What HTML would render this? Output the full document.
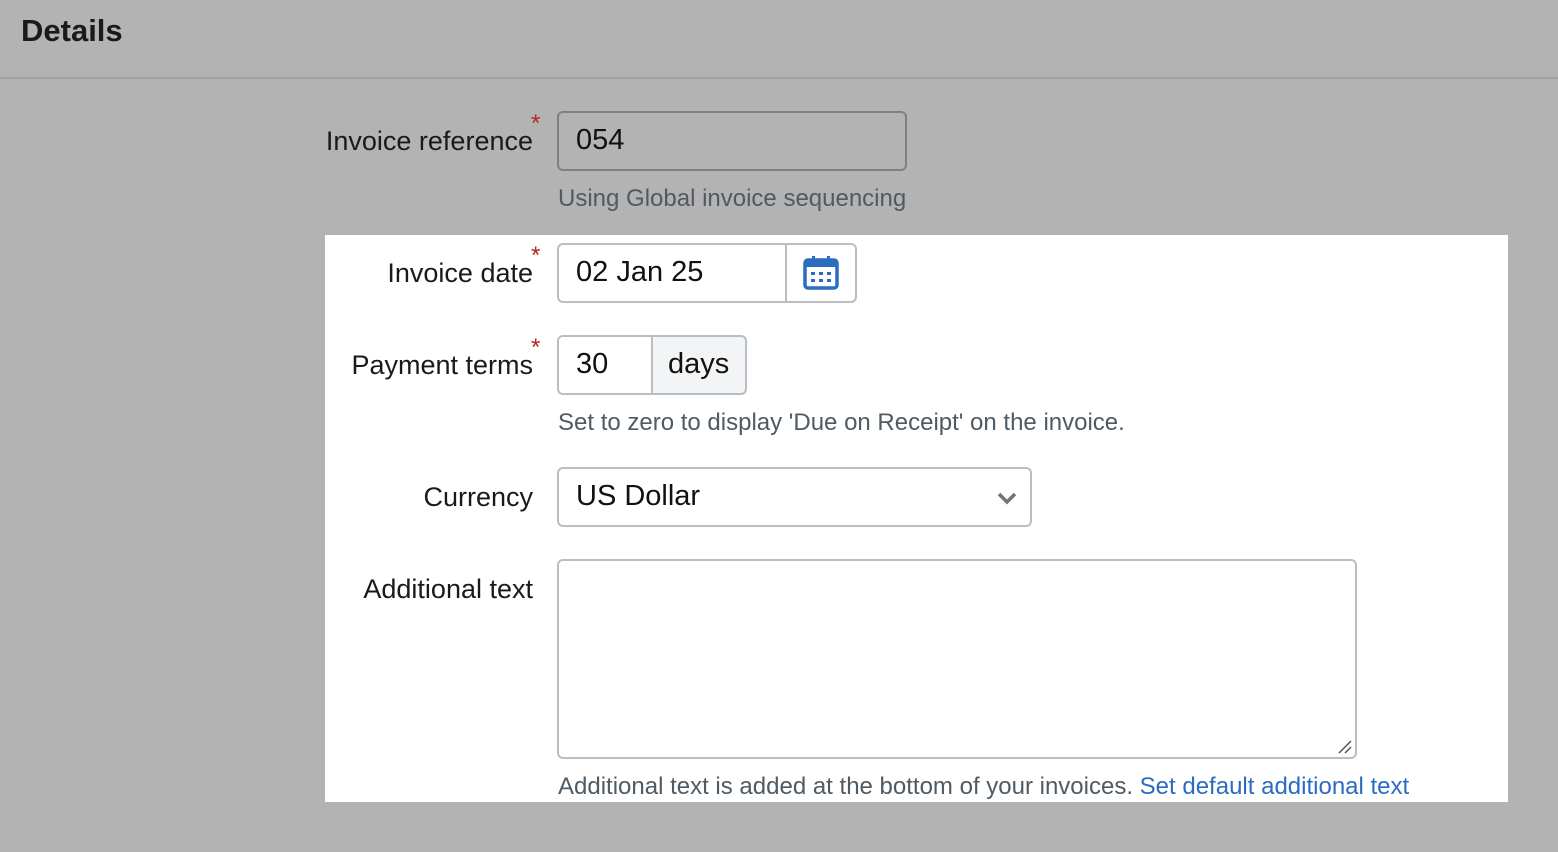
<!DOCTYPE html>
<html><head><style>
body{margin:0;width:1558px;height:852px;background:#b3b3b3;font-family:"Liberation Sans",sans-serif;position:relative;overflow:hidden;color:#1a1a1a}
.a{position:absolute}
.lbl{position:absolute;right:1025px;font-size:27px;color:#1a1a1a;white-space:nowrap}
.star{position:absolute;color:#b3261e;font-size:24px}
.box{position:absolute;border:2px solid #b9bec4;border-radius:6px;box-sizing:border-box;background:#fff}
.help{position:absolute;left:558px;font-size:24px;color:#4f5a63;white-space:nowrap}
.val{position:absolute;font-size:29px;color:#111}
</style></head><body>
<div class="a" style="left:21px;top:13px;font-size:31px;font-weight:bold;color:#1a1a1a">Details</div>
<div class="a" style="left:0;top:77px;width:1558px;height:2px;background:#a0a0a0"></div>
<div class="a" style="left:325px;top:235px;width:1183px;height:567px;background:#fff"></div>

<div class="lbl" style="top:126px">Invoice reference</div>
<div class="star" style="left:531px;top:110px">*</div>
<div class="box" style="left:557px;top:111px;width:350px;height:60px;background:#b3b3b3;border-color:#7d8187"></div>
<div class="val" style="left:576px;top:124px">054</div>
<div class="help" style="top:185px">Using Global invoice sequencing</div>

<div class="lbl" style="top:258px">Invoice date</div>
<div class="star" style="left:531px;top:242px">*</div>
<div class="box" style="left:557px;top:243px;width:300px;height:60px"></div>
<div class="a" style="left:785px;top:245px;width:2px;height:56px;background:#b9bec4"></div>
<div class="val" style="left:576px;top:256px">02 Jan 25</div>
<svg class="a" style="left:803px;top:255px" width="36" height="36" viewBox="0 0 36 36"><rect x="2" y="5" width="32" height="28" rx="3" fill="none" stroke="#2b6cc0" stroke-width="3.5"/><rect x="2" y="5" width="32" height="7" fill="#2b6cc0"/><rect x="9" y="1" width="3" height="7" fill="#2b6cc0"/><rect x="24" y="1" width="3" height="7" fill="#2b6cc0"/><g fill="#2b6cc0"><rect x="8" y="17" width="4" height="3"/><rect x="16" y="17" width="4" height="3"/><rect x="24" y="17" width="4" height="3"/><rect x="8" y="24" width="4" height="3"/><rect x="16" y="24" width="4" height="3"/><rect x="24" y="24" width="4" height="3"/></g></svg>

<div class="lbl" style="top:350px">Payment terms</div>
<div class="star" style="left:531px;top:334px">*</div>
<div class="box" style="left:557px;top:335px;width:190px;height:60px;background:#f3f4f6"></div>
<div class="a" style="left:559px;top:337px;width:92px;height:56px;background:#fff;border-right:2px solid #b9bec4;border-radius:4px 0 0 4px"></div>
<div class="val" style="left:576px;top:348px">30</div>
<div class="val" style="left:668px;top:348px">days</div>
<div class="help" style="top:409px">Set to zero to display 'Due on Receipt' on the invoice.</div>

<div class="lbl" style="top:482px">Currency</div>
<div class="box" style="left:557px;top:467px;width:475px;height:60px"></div>
<div class="val" style="left:576px;top:480px">US Dollar</div>
<svg class="a" style="left:996px;top:490px" width="22" height="16" viewBox="0 0 22 16"><path d="M3 4l8 8 8-8" fill="none" stroke="#6b757e" stroke-width="3.5"/></svg>

<div class="lbl" style="top:574px">Additional text</div>
<div class="box" style="left:557px;top:559px;width:800px;height:200px"></div>
<svg class="a" style="left:1338px;top:740px" width="14" height="14"><path d="M1 13L13 1M7 13L13 7" stroke="#555" stroke-width="1.5"/></svg>
<div class="help" style="top:773px">Additional text is added at the bottom of your invoices. <span style="color:#2b6cc0">Set default additional text</span></div>
</body></html>
